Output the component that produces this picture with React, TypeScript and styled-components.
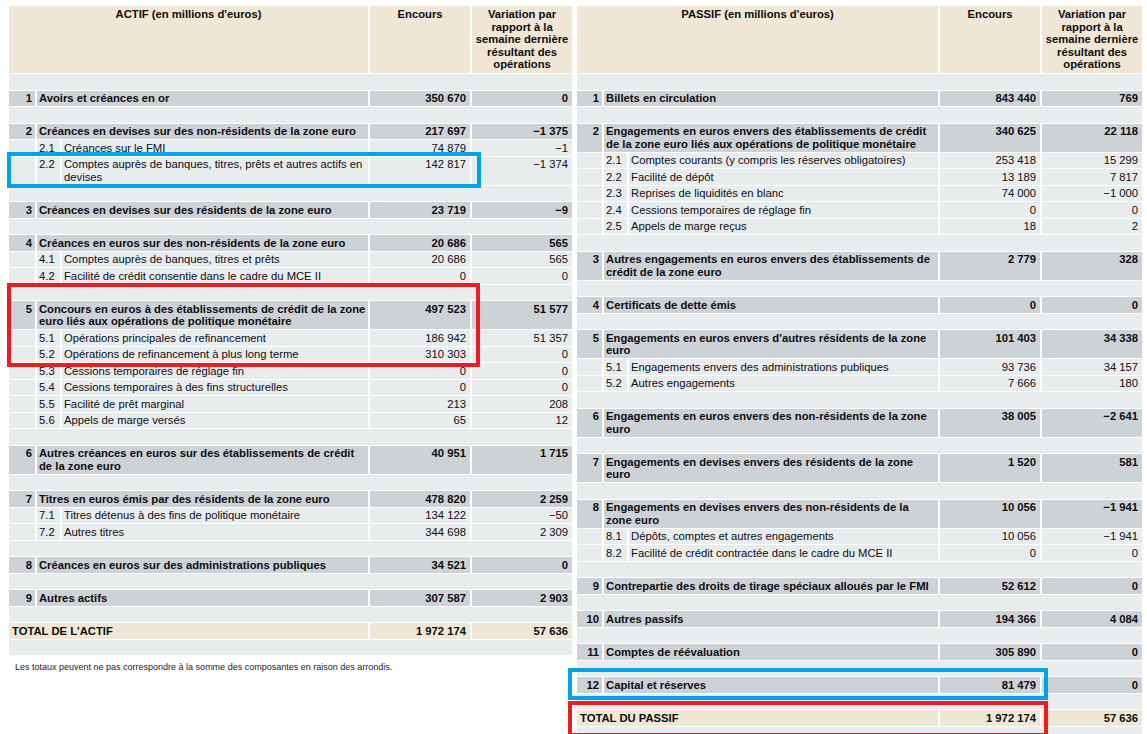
import React from "react";
import styled, { createGlobalStyle } from "styled-components";

type Row =
  | { kind: "spacer" }
  | { kind: "main"; num: string; label: string; enc: string; vari: string }
  | { kind: "sub"; num: string; label: string; enc: string; vari: string }
  | { kind: "total"; label: string; enc: string; vari: string };

const sp: Row = { kind: "spacer" };
const m = (num: string, label: string, enc: string, vari: string): Row => ({
  kind: "main",
  num,
  label,
  enc,
  vari
});
const s = (num: string, label: string, enc: string, vari: string): Row => ({
  kind: "sub",
  num,
  label,
  enc,
  vari
});

const actif: Row[] = [
  sp,
  m("1", "Avoirs et créances en or", "350 670", "0"),
  sp,
  m("2", "Créances en devises sur des non-résidents de la zone euro", "217 697", "−1 375"),
  s("2.1", "Créances sur le FMI", "74 879", "−1"),
  s("2.2", "Comptes auprès de banques, titres, prêts et autres actifs en\ndevises", "142 817", "−1 374"),
  sp,
  m("3", "Créances en devises sur des résidents de la zone euro", "23 719", "−9"),
  sp,
  m("4", "Créances en euros sur des non-résidents de la zone euro", "20 686", "565"),
  s("4.1", "Comptes auprès de banques, titres et prêts", "20 686", "565"),
  s("4.2", "Facilité de crédit consentie dans le cadre du MCE II", "0", "0"),
  sp,
  m("5", "Concours en euros à des établissements de crédit de la zone\neuro liés aux opérations de politique monétaire", "497 523", "51 577"),
  s("5.1", "Opérations principales de refinancement", "186 942", "51 357"),
  s("5.2", "Opérations de refinancement à plus long terme", "310 303", "0"),
  s("5.3", "Cessions temporaires de réglage fin", "0", "0"),
  s("5.4", "Cessions temporaires à des fins structurelles", "0", "0"),
  s("5.5", "Facilité de prêt marginal", "213", "208"),
  s("5.6", "Appels de marge versés", "65", "12"),
  sp,
  m("6", "Autres créances en euros sur des établissements de crédit\nde la zone euro", "40 951", "1 715"),
  sp,
  m("7", "Titres en euros émis par des résidents de la zone euro", "478 820", "2 259"),
  s("7.1", "Titres détenus à des fins de politique monétaire", "134 122", "−50"),
  s("7.2", "Autres titres", "344 698", "2 309"),
  sp,
  m("8", "Créances en euros sur des administrations publiques", "34 521", "0"),
  sp,
  m("9", "Autres actifs", "307 587", "2 903"),
  sp,
  { kind: "total", label: "TOTAL DE L'ACTIF", enc: "1 972 174", vari: "57 636" },
  sp
];

const passif: Row[] = [
  sp,
  m("1", "Billets en circulation", "843 440", "769"),
  sp,
  m("2", "Engagements en euros envers des établissements de crédit\nde la zone euro liés aux opérations de politique monétaire", "340 625", "22 118"),
  s("2.1", "Comptes courants (y compris les réserves obligatoires)", "253 418", "15 299"),
  s("2.2", "Facilité de dépôt", "13 189", "7 817"),
  s("2.3", "Reprises de liquidités en blanc", "74 000", "−1 000"),
  s("2.4", "Cessions temporaires de réglage fin", "0", "0"),
  s("2.5", "Appels de marge reçus", "18", "2"),
  sp,
  m("3", "Autres engagements en euros envers des établissements de\ncrédit de la zone euro", "2 779", "328"),
  sp,
  m("4", "Certificats de dette émis", "0", "0"),
  sp,
  m("5", "Engagements en euros envers d'autres résidents de la zone\neuro", "101 403", "34 338"),
  s("5.1", "Engagements envers des administrations publiques", "93 736", "34 157"),
  s("5.2", "Autres engagements", "7 666", "180"),
  sp,
  m("6", "Engagements en euros envers des non-résidents de la zone\neuro", "38 005", "−2 641"),
  sp,
  m("7", "Engagements en devises envers des résidents de la zone\neuro", "1 520", "581"),
  sp,
  m("8", "Engagements en devises envers des non-résidents de la\nzone euro", "10 056", "−1 941"),
  s("8.1", "Dépôts, comptes et autres engagements", "10 056", "−1 941"),
  s("8.2", "Facilité de crédit contractée dans le cadre du MCE II", "0", "0"),
  sp,
  m("9", "Contrepartie des droits de tirage spéciaux alloués par le FMI", "52 612", "0"),
  sp,
  m("10", "Autres passifs", "194 366", "4 084"),
  sp,
  m("11", "Comptes de réévaluation", "305 890", "0"),
  sp,
  m("12", "Capital et réserves", "81 479", "0"),
  sp,
  { kind: "total", label: "TOTAL DU PASSIF", enc: "1 972 174", vari: "57 636" },
  sp
];

const GlobalStyle = createGlobalStyle`
  body {
    margin: 0;
    background: #ffffff;
    font-family: "Liberation Sans", Arial, sans-serif;
    color: #0d0d12;
  }
`;

const Page = styled.div`
  position: relative;
  display: flex;
  align-items: flex-start;
  gap: 1px;
  padding: 5px 0 0 7px;
  width: 1147px;
  height: 734px;
  box-sizing: border-box;
  overflow: hidden;
`;

const Column = styled.div`
  display: flex;
  flex-direction: column;
`;

const Table = styled.table<{ $w: number }>`
  width: ${(p) => p.$w}px;
  table-layout: fixed;
  border-collapse: separate;
  border-spacing: 2px 1px;
  font-size: 11.25px;
  line-height: 12.5px;
`;

const Cell = styled.td<{
  $bg: "head" | "main" | "light";
  $bold?: boolean;
  $align?: "left" | "right" | "center";
}>`
  background: ${(p) =>
    p.$bg === "head" ? "#efe6d6" : p.$bg === "main" ? "#cdd2d6" : "#e8eced"};
  font-weight: ${(p) => (p.$bold ? 700 : 400)};
  text-align: ${(p) => p.$align || "left"};
  vertical-align: top;
  padding: 1.5px 2px;
  white-space: pre;
  overflow: visible;
`;

const NumCell = styled(Cell)`
  padding-right: 3px;
`;

const ValueCell = styled(Cell)`
  padding-right: 4px;
`;

const HeadCell = styled(Cell)`
  padding: 2px 2px 2.5px;
`;

const TotalLabel = styled(Cell)`
  padding-left: 3px;
`;

const Note = styled.p`
  margin: 6px 0 0 8px;
  font-size: 9px;
  line-height: 11px;
  color: #1a1a30;
`;

const Mark = styled.div<{ $color: string }>`
  position: absolute;
  box-sizing: border-box;
  border: 4px solid ${(p) => p.$color};
  pointer-events: none;
`;

function BalanceTable({
  title,
  rows,
  widths
}: {
  title: string;
  rows: Row[];
  widths: number[];
}) {
  const total = widths.reduce((a, b) => a + b, 0) + (widths.length + 1) * 2;
  return (
    <Table $w={total}>
      <colgroup>
        {widths.map((w, i) => (
          <col key={i} style={{ width: w }} />
        ))}
      </colgroup>
      <tbody>
        <tr>
          <HeadCell $bg="head" $bold $align="center" colSpan={3}>
            {title}
          </HeadCell>
          <HeadCell $bg="head" $bold $align="center">
            Encours
          </HeadCell>
          <HeadCell $bg="head" $bold $align="center">
            {"Variation par\nrapport à la\nsemaine dernière\nrésultant des\nopérations"}
          </HeadCell>
        </tr>
        {rows.map((r, i) => {
          if (r.kind === "spacer") {
            return (
              <tr key={i}>
                <Cell $bg="light" colSpan={5}>
                  {"\u00a0"}
                </Cell>
              </tr>
            );
          }
          if (r.kind === "total") {
            return (
              <tr key={i}>
                <TotalLabel $bg="head" $bold colSpan={3}>
                  {r.label}
                </TotalLabel>
                <ValueCell $bg="head" $bold $align="right">
                  {r.enc}
                </ValueCell>
                <ValueCell $bg="head" $bold $align="right">
                  {r.vari}
                </ValueCell>
              </tr>
            );
          }
          if (r.kind === "main") {
            return (
              <tr key={i}>
                <NumCell $bg="main" $bold $align="right">
                  {r.num}
                </NumCell>
                <Cell $bg="main" $bold colSpan={2}>
                  {r.label}
                </Cell>
                <ValueCell $bg="main" $bold $align="right">
                  {r.enc}
                </ValueCell>
                <ValueCell $bg="main" $bold $align="right">
                  {r.vari}
                </ValueCell>
              </tr>
            );
          }
          return (
            <tr key={i}>
              <Cell $bg="light" />
              <Cell $bg="light">{r.num}</Cell>
              <Cell $bg="light">{r.label}</Cell>
              <ValueCell $bg="light" $align="right">
                {r.enc}
              </ValueCell>
              <ValueCell $bg="light" $align="right">
                {r.vari}
              </ValueCell>
            </tr>
          );
        })}
      </tbody>
    </Table>
  );
}

export default function App() {
  return (
    <>
      <GlobalStyle />
      <Page>
        <Column>
          <BalanceTable
            title="ACTIF (en millions d'euros)"
            rows={actif}
            widths={[26, 23, 306, 100, 100]}
          />
          <Note>
            Les totaux peuvent ne pas correspondre à la somme des composantes en
            raison des arrondis.
          </Note>
        </Column>
        <Column>
          <BalanceTable
            title="PASSIF (en millions d'euros)"
            rows={passif}
            widths={[25, 23, 309, 100, 100]}
          />
        </Column>
        <Mark $color="#00a2e8" style={{ left: 7, top: 152, width: 474, height: 36 }} />
        <Mark $color="#ed1c24" style={{ left: 7, top: 283, width: 473, height: 84 }} />
        <Mark $color="#00a2e8" style={{ left: 568, top: 668, width: 480, height: 32 }} />
        <Mark $color="#ed1c24" style={{ left: 568, top: 701, width: 480, height: 36 }} />
      </Page>
    </>
  );
}
